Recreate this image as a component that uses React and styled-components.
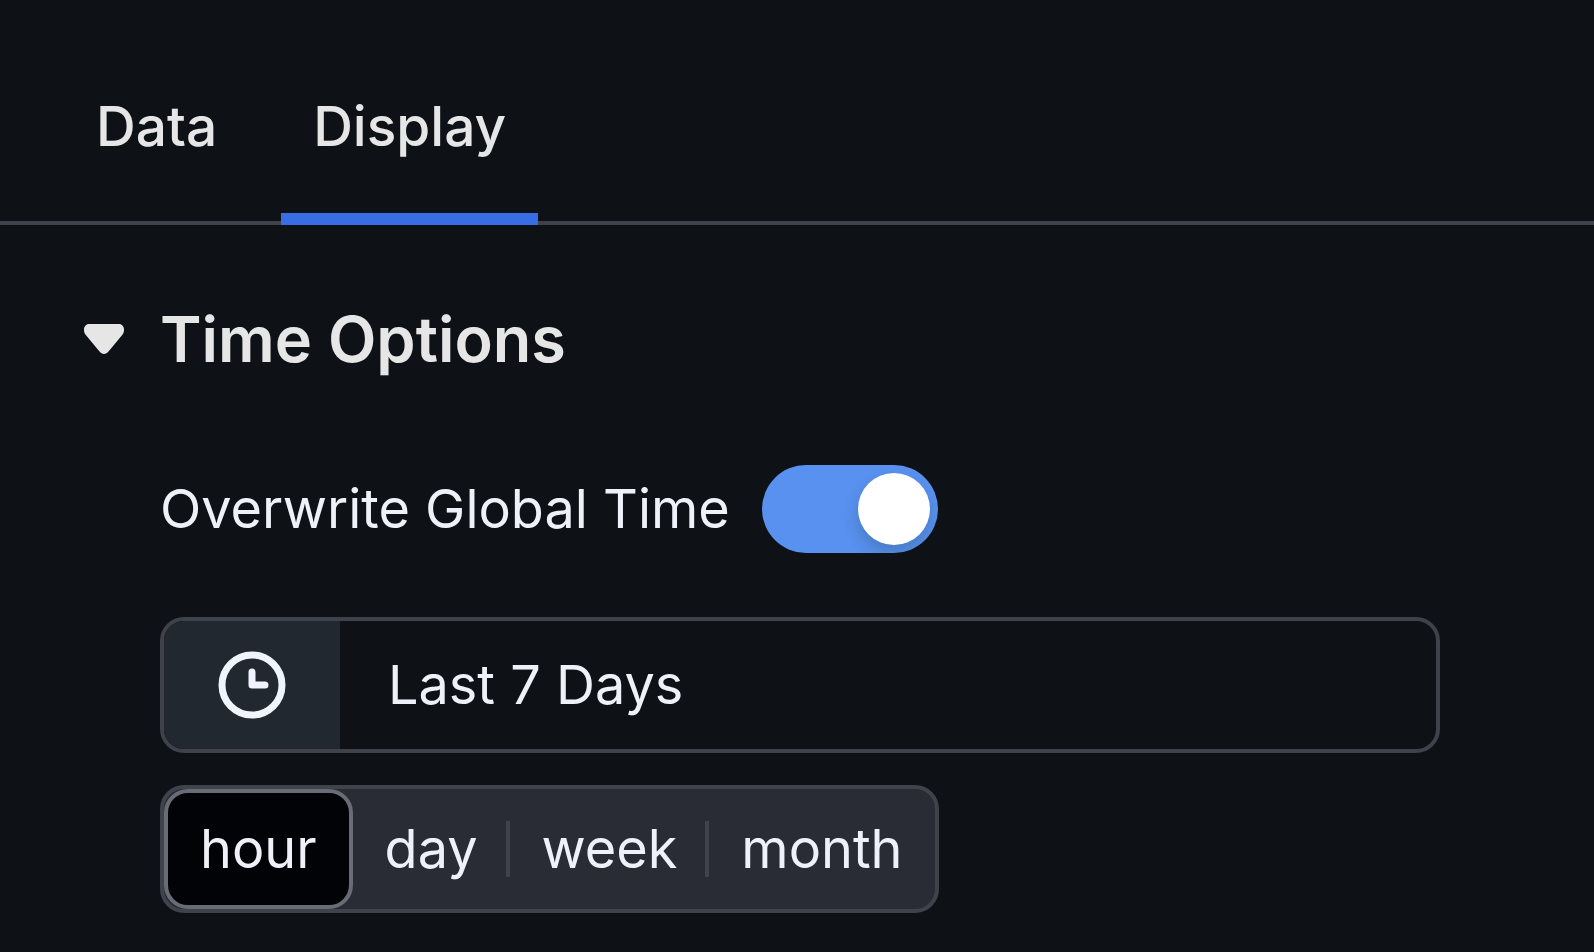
import React, { useState } from 'react';
import styled, { createGlobalStyle } from 'styled-components';

const tabs = ['Data', 'Display'];
const intervals = ['hour', 'day', 'week', 'month'];

function ClockIcon() {
  return (
    <svg width="68" height="68" viewBox="0 0 68 68" fill="none" aria-hidden="true">
      <circle cx="34" cy="34" r="30" stroke="#f0f4ff" strokeWidth="7" />
      <path
        d="M34 21v13h13"
        stroke="#f0f4ff"
        strokeWidth="7"
        strokeLinecap="round"
        strokeLinejoin="round"
      />
    </svg>
  );
}

function CaretIcon() {
  return (
    <svg width="40" height="30" viewBox="0 0 40 30" aria-hidden="true">
      <path
        d="M5 0H35C38 0 40 2.500 40 5.500C40 8 39.500 9.500 38 11.300L24.500 27.500C22 30.700 18 30.700 15.500 27.500L2 11.300C0.500 9.500 0 8 0 5.500C0 2.500 2 0 5 0Z"
        fill="#e6e6e6"
      />
    </svg>
  );
}

function App() {
  const [tab, setTab] = useState('Display');
  const [open, setOpen] = useState(true);
  const [overwrite, setOverwrite] = useState(true);
  const [range, setRange] = useState('Last 7 Days');
  const [interval, setTimeInterval] = useState('hour');

  return (
    <>
      <GlobalStyle />
      <TabBar role="tablist">
        {tabs.map(name => (
          <Tab
            key={name}
            type="button"
            role="tab"
            aria-selected={tab === name}
            $active={tab === name}
            onClick={() => setTab(name)}
          >
            {name}
          </Tab>
        ))}
      </TabBar>
      <Section>
        <SectionTitle>
          <SectionToggle type="button" aria-expanded={open} onClick={() => setOpen(!open)}>
            <CaretIcon />
            Time Options
          </SectionToggle>
        </SectionTitle>
        {open && (
          <Options>
            <SwitchRow>
              <label htmlFor="overwrite">Overwrite Global Time</label>
              <Switch
                id="overwrite"
                type="checkbox"
                role="switch"
                checked={overwrite}
                onChange={e => setOverwrite(e.target.checked)}
              />
            </SwitchRow>
            <RangeField>
              <RangeAddon htmlFor="range">
                <ClockIcon />
              </RangeAddon>
              <RangeInput
                id="range"
                type="text"
                aria-label="Time range"
                value={range}
                onChange={e => setRange(e.target.value)}
              />
            </RangeField>
            <Segments role="radiogroup" aria-label="Interval">
              {intervals.map(name => (
                <Segment key={name}>
                  <input
                    type="radio"
                    name="interval"
                    value={name}
                    checked={interval === name}
                    onChange={() => setTimeInterval(name)}
                  />
                  {name}
                </Segment>
              ))}
            </Segments>
          </Options>
        )}
      </Section>
    </>
  );
}

const GlobalStyle = createGlobalStyle`
  * {
    box-sizing: border-box;
  }

  body {
    margin: 0;
    background-color: #0e1116;
    color: #eef1f8;
    font-family: Inter, 'Liberation Sans', sans-serif;
    font-size: 54px;
    line-height: 80px;
  }

  button,
  input {
    margin: 0;
    font: inherit;
    color: inherit;
  }
`;

const TabBar = styled.div`
  display: flex;
  gap: 32px;
  padding: 86px 64px 0;
  box-shadow: inset 0 -4px #3f424a;
`;

const Tab = styled.button`
  padding: 0 32px 47px;
  border: none;
  border-bottom: 12px solid ${props => (props.$active ? '#386de3' : 'transparent')};
  background: none;
  color: #e6e6e6;
  font-size: 55px;
  font-weight: 500;
  cursor: pointer;
`;

const Section = styled.section`
  padding: 74px 154px 38px 84px;
`;

const SectionTitle = styled.h2`
  margin: 0;
  font-size: 63px;
  font-weight: 600;
`;

const SectionToggle = styled.button`
  display: flex;
  align-items: center;
  gap: 36px;
  padding: 0;
  border: none;
  background: none;
  color: #e6e6e6;
  cursor: pointer;
`;

const Options = styled.div`
  display: flex;
  flex-direction: column;
  align-items: flex-start;
  padding: 86px 0 0 76px;
`;

const SwitchRow = styled.div`
  display: flex;
  align-items: center;
  gap: 32px;
`;

const Switch = styled.input`
  appearance: none;
  width: 176px;
  height: 88px;
  padding: 8px;
  border-radius: 44px;
  background-color: #434750;
  overflow: hidden;
  cursor: pointer;

  &::before {
    content: '';
    display: block;
    width: 72px;
    height: 72px;
    border-radius: 50%;
    background-color: #fff;
    box-shadow: 0 8px 16px rgba(0, 35, 11, 0.2);
  }

  &:checked {
    background-color: #5991f0;
  }

  &:checked::before {
    margin-left: auto;
  }
`;

const RangeField = styled.div`
  display: flex;
  width: 100%;
  height: 136px;
  margin-top: 64px;
  border: 4px solid #3f424a;
  border-radius: 24px;
  overflow: hidden;
`;

const RangeAddon = styled.label`
  display: flex;
  align-items: center;
  justify-content: center;
  width: 176px;
  background-color: #22282f;
`;

const RangeInput = styled.input`
  flex: 1;
  min-width: 0;
  padding: 0 48px;
  border: none;
  outline: none;
  background: none;
`;

const Segments = styled.div`
  display: flex;
  margin-top: 32px;
  border: 4px solid #3f434b;
  border-radius: 24px;
  background-color: #292c35;
`;

const Segment = styled.label`
  display: flex;
  align-items: center;
  height: 120px;
  padding: 0 32px;
  cursor: pointer;

  input {
    appearance: none;
    width: 0;
    height: 0;
  }

  /* separator before the next segment */
  &:not(:last-child) {
    padding-right: 0;
  }

  &:not(:last-child)::after {
    content: '';
    width: 4px;
    height: 56px;
    margin-left: 28px;
    background-color: #3f434b;
  }

  &:has(:checked) {
    padding: 0 32px;
    border: 4px solid #686c75;
    border-radius: 24px;
    background-color: #020306;
  }

  &:has(:checked)::after {
    display: none;
  }
`;

export default App;
